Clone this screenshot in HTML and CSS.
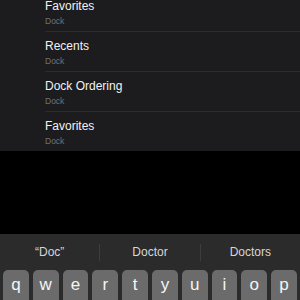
FILE: index.html
```html
<!DOCTYPE html>
<html>
<head>
<meta charset="utf-8">
<link rel="stylesheet" href="styles.css">
</head>
<body>
<div class="screen">
  <ul class="list">
    <li class="row"><div class="title">Favorites</div><div class="sub">Dock</div></li>
    <li class="row"><div class="title">Recents</div><div class="sub">Dock</div></li>
    <li class="row"><div class="title">Dock Ordering</div><div class="sub">Dock</div></li>
    <li class="row"><div class="title">Favorites</div><div class="sub">Dock</div></li>
  </ul>
  <div class="spacer"></div>
  <div class="keyboard">
    <div class="suggestions">
      <div class="sugg">“Doc”</div>
      <div class="sugg">Doctor</div>
      <div class="sugg">Doctors</div>
    </div>
    <div class="keys">
      <div class="key">q</div><div class="key">w</div><div class="key">e</div><div class="key">r</div><div class="key">t</div><div class="key">y</div><div class="key">u</div><div class="key">i</div><div class="key">o</div><div class="key">p</div>
    </div>
  </div>
</div>
</body>
</html>
```
FILE: styles.css
```css
html, body {
  margin: 0;
  padding: 0;
  background: #000;
  width: 300px;
  height: 300px;
  overflow: hidden;
  font-family: "Liberation Sans", Arial, sans-serif;
}
.screen {
  display: flex;
  flex-direction: column;
  height: 300px;
}
.list {
  flex-shrink: 0;
  list-style: none;
  margin: -8px 0 0 0;
  padding: 0 0 0 45px;
  background: #1c1c1e;
}
.row {
  height: 39px;
  border-bottom: 1px solid #2c2c2e;
  display: flex;
  flex-direction: column;
}
.row:last-child {
  border-bottom: none;
}
.title {
  color: #f2f2f2;
  font-size: 12px;
  line-height: 14px;
  margin-top: 7px;
}
.sub {
  color: #727276;
  font-size: 8.5px;
  line-height: 10px;
  margin-top: 3px;
}
.spacer {
  flex-shrink: 0;
  height: 83px;
  background: #000;
}
.keyboard {
  flex-shrink: 0;
  background: #2b2b2b;
  display: flex;
  flex-direction: column;
}
.suggestions {
  display: flex;
  height: 36px;
  align-items: center;
}
.sugg {
  flex: 1;
  text-align: center;
  color: #d6d6d6;
  font-size: 12px;
  line-height: 17px;
  border-left: 1px solid #3d3d3d;
}
.sugg:first-child {
  border-left: none;
}
.keys {
  display: flex;
  gap: 4px;
  padding: 0 3px;
}
.key {
  flex: 1;
  height: 38px;
  background: #6b6b6b;
  border-radius: 5px;
  color: #f5f5f5;
  font-size: 17px;
  text-align: center;
  line-height: 30px;
}
```
